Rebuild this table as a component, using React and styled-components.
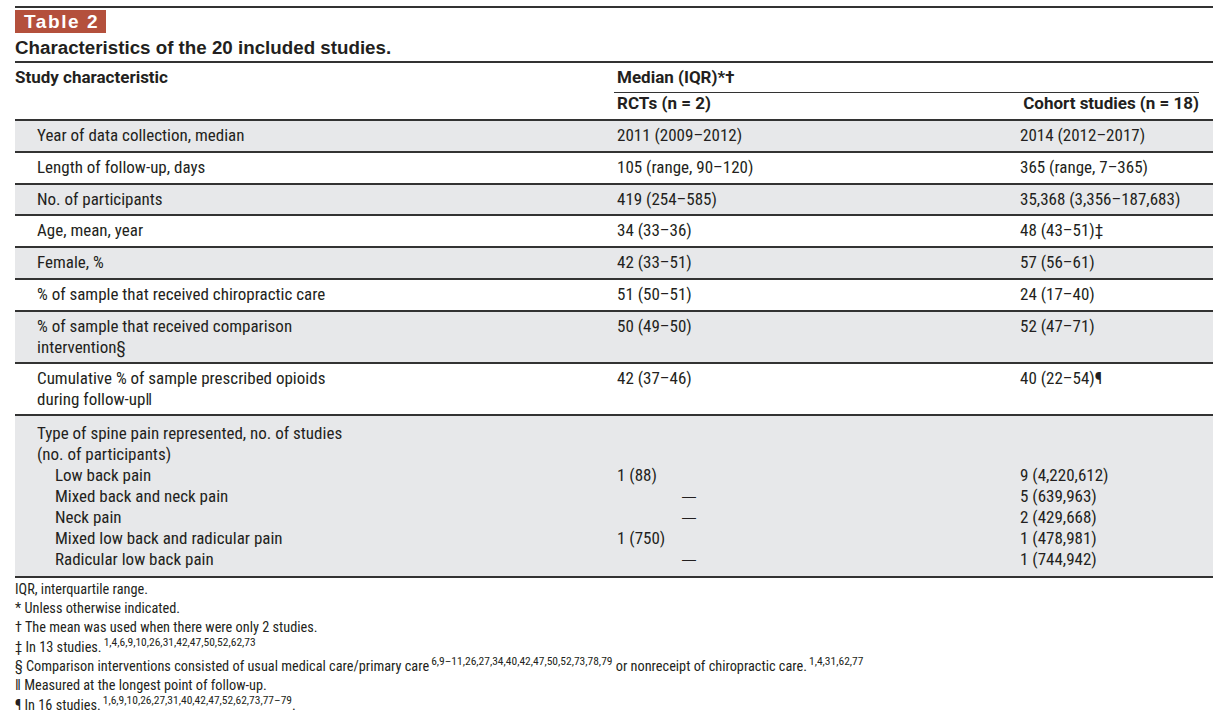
import React from 'react'
import styled, { createGlobalStyle } from 'styled-components'

const GlobalStyle = createGlobalStyle`
  body {
    margin: 0;
    background: #fff;
    color: #231f20;
    font-family: Roboto, "Liberation Sans", Arial, sans-serif;
    font-stretch: 87.5%;
  }
`

const Page = styled.div`
  width: 1198px;
  padding: 6px 0 0 15px;
`

const TopRule = styled.div`
  border-top: 2px solid #333;
  padding-top: 2px;
`

const Badge = styled.div`
  display: inline-block;
  background: #b4503c;
  color: #fff;
  font-family: "Liberation Sans", Arial, sans-serif;
  font-stretch: normal;
  font-weight: bold;
  font-size: 19px;
  letter-spacing: 1.6px;
  line-height: 23px;
  padding: 0 7px 0 9px;
`

const Caption = styled.div`
  font-family: "Liberation Sans", Arial, sans-serif;
  font-stretch: normal;
  font-weight: bold;
  font-size: 18.75px;
  line-height: 27px;
  padding-top: 1px;
  border-bottom: 2px solid #333;
`

const Row = styled.div`
  display: grid;
  grid-template-columns: 599px 403px 1fr;
  background: ${p => (p.$shade ? '#e7e8ea' : '#fff')};
  border-bottom: 2px solid #333;
  font-size: 17px;
  line-height: 21px;
  padding: ${p => p.$pad || '4px 0 4.8px'};
`

const HeadRow = styled.div`
  display: grid;
  grid-template-columns: 599px 1fr;
  border-bottom: 2px solid #333;
  font-weight: bold;
  font-stretch: normal;
  font-size: 17px;
  line-height: 21px;
`

const HeadLabel = styled.div`
  padding-top: 4px;
`

const HeadGroup = styled.div`
  padding: 4px 14px 5px 3px;
`

const Spanner = styled.div`
  border-bottom: 1.5px solid #333;
  padding: 0 0 4px 3px;
  margin-left: -3px;
`

const SubHeads = styled.div`
  display: flex;
  justify-content: space-between;
`

const Label = styled.div`
  padding-left: ${p => (p.$sub ? 40 : 22)}px;
`

const Cell = styled.div`
  padding-left: 3px;
`

const Dash = styled.div`
  padding-left: 68px;
  font-family: "Liberation Sans", Arial, sans-serif;
  font-stretch: normal;
  font-size: 14px;
`

const Notes = styled.div`
  font-size: 14.3px;
  line-height: 19.3px;
  padding-top: 2px;
`

const Sup = styled.sup`
  font-size: 11.5px;
  line-height: 0;
  vertical-align: 6px;
  margin-left: 2px;
`

const simpleRows = [
  ['Year of data collection, median', '2011 (2009–2012)', '2014 (2012–2017)'],
  ['Length of follow-up, days', '105 (range, 90–120)', '365 (range, 7–365)'],
  ['No. of participants', '419 (254–585)', '35,368 (3,356–187,683)'],
  ['Age, mean, year', '34 (33–36)', '48 (43–51)‡'],
  ['Female, %', '42 (33–51)', '57 (56–61)'],
  ['% of sample that received chiropractic care', '51 (50–51)', '24 (17–40)'],
]

const wrapRows = [
  ['% of sample that received comparison', 'intervention§', '50 (49–50)', '52 (47–71)'],
  ['Cumulative % of sample prescribed opioids', 'during follow-up‖', '42 (37–46)', '40 (22–54)¶'],
]

const painTypes = [
  ['Low back pain', '1 (88)', '9 (4,220,612)'],
  ['Mixed back and neck pain', '—', '5 (639,963)'],
  ['Neck pain', '—', '2 (429,668)'],
  ['Mixed low back and radicular pain', '1 (750)', '1 (478,981)'],
  ['Radicular low back pain', '—', '1 (744,942)'],
]

const App = () => {
  return (
    <Page>
      <GlobalStyle />
      <TopRule>
        <Badge>Table 2</Badge>
      </TopRule>
      <Caption>Characteristics of the 20 included studies.</Caption>
      <HeadRow>
        <HeadLabel>Study characteristic</HeadLabel>
        <HeadGroup>
          <Spanner>Median (IQR)*†</Spanner>
          <SubHeads>
            <span>RCTs (n = 2)</span>
            <span>Cohort studies (n = 18)</span>
          </SubHeads>
        </HeadGroup>
      </HeadRow>
      {simpleRows.map(([label, rct, cohort], i) => (
        <Row key={label} $shade={i % 2 === 0}>
          <Label>{label}</Label>
          <Cell>{rct}</Cell>
          <Cell>{cohort}</Cell>
        </Row>
      ))}
      {wrapRows.map(([first, second, rct, cohort], i) => (
        <Row key={first} $shade={i % 2 === 0} $pad='4px 0 4px'>
          <Label>
            {first}
            <br />
            {second}
          </Label>
          <Cell>{rct}</Cell>
          <Cell>{cohort}</Cell>
        </Row>
      ))}
      <Row $shade $pad='7px 0 6px'>
        <div>
          <Label>Type of spine pain represented, no. of studies</Label>
          <Label>(no. of participants)</Label>
          {painTypes.map(([label]) => (
            <Label key={label} $sub>{label}</Label>
          ))}
        </div>
        <div>
          <Cell>&nbsp;</Cell>
          <Cell>&nbsp;</Cell>
          {painTypes.map(([label, rct]) =>
            rct === '—' ? <Dash key={label}>{rct}</Dash> : <Cell key={label}>{rct}</Cell>
          )}
        </div>
        <div>
          <Cell>&nbsp;</Cell>
          <Cell>&nbsp;</Cell>
          {painTypes.map(([label, , cohort]) => (
            <Cell key={label}>{cohort}</Cell>
          ))}
        </div>
      </Row>
      <Notes>
        <div>IQR, interquartile range.</div>
        <div>* Unless otherwise indicated.</div>
        <div>† The mean was used when there were only 2 studies.</div>
        <div>
          ‡ In 13 studies.<Sup>1,4,6,9,10,26,31,42,47,50,52,62,73</Sup>
        </div>
        <div>
          § Comparison interventions consisted of usual medical care/primary care
          <Sup>6,9–11,26,27,34,40,42,47,50,52,73,78,79</Sup> or nonreceipt of chiropractic care.
          <Sup>1,4,31,62,77</Sup>
        </div>
        <div>‖ Measured at the longest point of follow-up.</div>
        <div>
          ¶ In 16 studies.<Sup>1,6,9,10,26,27,31,40,42,47,52,62,73,77–79</Sup>.
        </div>
      </Notes>
    </Page>
  )
}

export default App
